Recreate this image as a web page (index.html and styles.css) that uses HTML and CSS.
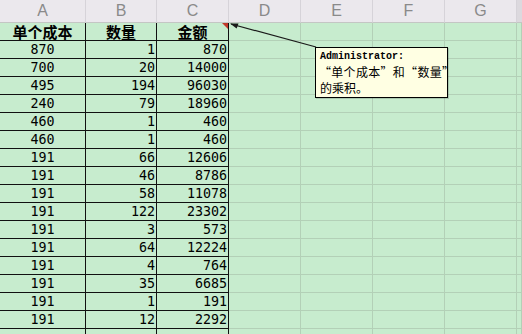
FILE: index.html
```html
<!DOCTYPE html>
<html lang="zh-CN">
<head>
<meta charset="utf-8">
<title>Sheet</title>
<link rel="stylesheet" href="styles.css">
</head>
<body>
<div class="sheet">
  <div class="hd">A</div><div class="hd">B</div><div class="hd">C</div><div class="hd">D</div><div class="hd">E</div><div class="hd">F</div><div class="hd">G</div><div class="hd hd-h"></div>

  <div class="c t ttl">单个成本</div><div class="c t ttl">数量</div><div class="c t ttl flag">金额</div><div class="c"></div><div class="c"></div><div class="c"></div><div class="c"></div><div class="c"></div>

  <div class="c t num mid">870</div><div class="c t num">1</div><div class="c t num">870</div><div class="c"></div><div class="c"></div><div class="c"></div><div class="c"></div><div class="c"></div>
  <div class="c t num mid">700</div><div class="c t num">20</div><div class="c t num">14000</div><div class="c"></div><div class="c"></div><div class="c"></div><div class="c"></div><div class="c"></div>
  <div class="c t num mid">495</div><div class="c t num">194</div><div class="c t num">96030</div><div class="c"></div><div class="c"></div><div class="c"></div><div class="c"></div><div class="c"></div>
  <div class="c t num mid">240</div><div class="c t num">79</div><div class="c t num">18960</div><div class="c"></div><div class="c"></div><div class="c"></div><div class="c"></div><div class="c"></div>
  <div class="c t num mid">460</div><div class="c t num">1</div><div class="c t num">460</div><div class="c"></div><div class="c"></div><div class="c"></div><div class="c"></div><div class="c"></div>
  <div class="c t num mid">460</div><div class="c t num">1</div><div class="c t num">460</div><div class="c"></div><div class="c"></div><div class="c"></div><div class="c"></div><div class="c"></div>
  <div class="c t num mid">191</div><div class="c t num">66</div><div class="c t num">12606</div><div class="c"></div><div class="c"></div><div class="c"></div><div class="c"></div><div class="c"></div>
  <div class="c t num mid">191</div><div class="c t num">46</div><div class="c t num">8786</div><div class="c"></div><div class="c"></div><div class="c"></div><div class="c"></div><div class="c"></div>
  <div class="c t num mid">191</div><div class="c t num">58</div><div class="c t num">11078</div><div class="c"></div><div class="c"></div><div class="c"></div><div class="c"></div><div class="c"></div>
  <div class="c t num mid">191</div><div class="c t num">122</div><div class="c t num">23302</div><div class="c"></div><div class="c"></div><div class="c"></div><div class="c"></div><div class="c"></div>
  <div class="c t num mid">191</div><div class="c t num">3</div><div class="c t num">573</div><div class="c"></div><div class="c"></div><div class="c"></div><div class="c"></div><div class="c"></div>
  <div class="c t num mid">191</div><div class="c t num">64</div><div class="c t num">12224</div><div class="c"></div><div class="c"></div><div class="c"></div><div class="c"></div><div class="c"></div>
  <div class="c t num mid">191</div><div class="c t num">4</div><div class="c t num">764</div><div class="c"></div><div class="c"></div><div class="c"></div><div class="c"></div><div class="c"></div>
  <div class="c t num mid">191</div><div class="c t num">35</div><div class="c t num">6685</div><div class="c"></div><div class="c"></div><div class="c"></div><div class="c"></div><div class="c"></div>
  <div class="c t num mid">191</div><div class="c t num">1</div><div class="c t num">191</div><div class="c"></div><div class="c"></div><div class="c"></div><div class="c"></div><div class="c"></div>
  <div class="c t num mid">191</div><div class="c t num">12</div><div class="c t num">2292</div><div class="c"></div><div class="c"></div><div class="c"></div><div class="c"></div><div class="c"></div>
  <div class="c t"></div><div class="c t"></div><div class="c t"></div><div class="c"></div><div class="c"></div><div class="c"></div><div class="c"></div><div class="c"></div>
</div>

<svg class="leader" width="522" height="334" viewBox="0 0 522 334" aria-hidden="true">
  <line x1="231" y1="24" x2="316" y2="47" stroke="#1a1a1a" stroke-width="1.2"/>
  <polygon points="230,23.5 238.5,23.6 236.6,28.5" fill="#1a1a1a"/>
</svg>

<div class="note">
  <div class="note-author">Administrator:</div>
  <div class="note-line wide">“单个成本”和“数量”</div>
  <div class="note-line">的乘积。</div>
</div>
</body>
</html>
```

FILE: styles.css
```css
html, body {
  margin: 0;
  padding: 0;
}
body {
  width: 522px;
  height: 334px;
  overflow: hidden;
  position: relative;
  background: #c7ecce;
}
.sheet {
  display: grid;
  grid-template-columns: 86px 71px 72px 72px 72px 72px 72px 5px;
  grid-template-rows: 23px;
  grid-auto-rows: 18px;
  width: 522px;
  height: 334px;
  overflow: hidden;
}
.hd {
  box-sizing: border-box;
  background: #ebe8ed;
  border-right: 1px solid #d6d3d9;
  border-bottom: 1px solid #c4c6c4;
  color: #8a8a8a;
  font: 16px/22px "Liberation Sans", Arial, sans-serif;
  text-align: center;
}
.hd-h {
  background: #dcd9de;
  border-right: 0;
}
.c {
  box-sizing: border-box;
  border-right: 1px solid #b3d0b7;
  border-bottom: 1px solid #b3d0b7;
  position: relative;
}
.t {
  border-right-color: #111;
  border-bottom-color: #111;
}
.ttl {
  font: bold 15px/17px "Noto Sans CJK SC", sans-serif;
  text-align: center;
  color: #000;
}
.num {
  font: 13.33px/18px "DejaVu Sans Mono", monospace;
  color: #000;
  text-align: right;
  padding-right: 1px;
}
.mid {
  text-align: center;
  padding-right: 0;
}
.flag::after {
  content: "";
  position: absolute;
  top: 0;
  right: 0;
  border-top: 6px solid #c0392b;
  border-left: 6px solid transparent;
}
.leader {
  position: absolute;
  left: 0;
  top: 0;
  pointer-events: none;
}
.note {
  position: absolute;
  left: 315px;
  top: 47px;
  width: 133px;
  height: 51px;
  box-sizing: border-box;
  border: 1px solid #000;
  background: #ffffe3;
  padding: 2px 0 0 4px;
  white-space: nowrap;
  box-shadow: 1px 1px 0 rgba(0,0,0,0.15);
}
.note-author {
  font: bold 10px/14px "Liberation Mono", monospace;
  color: #000;
}
.note-line {
  font: 12px/16px "Noto Sans CJK SC", sans-serif;
  color: #000;
}
.wide {
  margin-left: -1px;
  letter-spacing: 0.3px;
}
```
